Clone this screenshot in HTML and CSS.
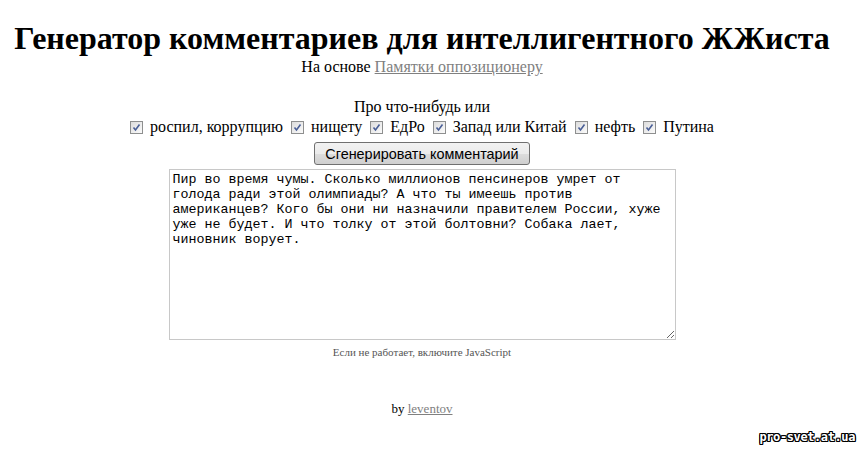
FILE: index.html
```html
<!DOCTYPE html>
<html lang="ru">
<head>
  <meta charset="UTF-8">
  <title>Генератор комментариев для интеллигентного ЖЖиста</title>
  <link rel="stylesheet" href="styles.css">
</head>
<body>
  <div class="page">
    <h1>Генератор комментариев для интеллигентного ЖЖиста</h1>
    <p class="subtitle">На основе <a href="#">Памятки оппозиционеру</a></p>

    <form class="generator">
      <div class="topics-title">Про что-нибудь или</div>
      <div class="topics">
        <label><input type="checkbox" checked> роспил, коррупцию</label>
        <label><input type="checkbox" checked> нищету</label>
        <label><input type="checkbox" checked> ЕдРо</label>
        <label><input type="checkbox" checked> Запад или Китай</label>
        <label><input type="checkbox" checked> нефть</label>
        <label><input type="checkbox" checked> Путина</label>
      </div>
      <button type="button" class="button">Сгенерировать комментарий</button>
      <textarea class="comment">Пир во время чумы. Сколько миллионов пенсинеров умрет от голода ради этой олимпиады? А что ты имеешь против американцев? Кого бы они ни назначили правителем России, хуже уже не будет. И что толку от этой болтовни? Собака лает, чиновник ворует.</textarea>
      <p class="note">Если не работает, включите JavaScript</p>
    </form>

    <p class="author">by <a href="#">leventov</a></p>
  </div>
  <div class="watermark">pro-svet.at.ua</div>
</body>
</html>
```

FILE: styles.css
```css
body {
  font-family: "Liberation Serif", "Times New Roman", serif;
  font-size: 16px;
  color: #000;
  background: #fff;
  margin: 0;
  padding-right: 17px;
}
a {
  color: #808080;
}
.page {
  text-align: center;
}
h1 {
  font-size: 32px;
  margin: 18px 0 0;
  line-height: 40px;
}
.subtitle {
  margin: 0;
  line-height: 18px;
}
.generator {
  margin-top: 21px;
  display: flex;
  flex-direction: column;
  align-items: center;
}
.topics-title {
  line-height: 20px;
}
.topics {
  display: flex;
  gap: 8px;
  line-height: 20px;
}
.topics label {
  display: flex;
  align-items: center;
  gap: 7px;
}
.topics input {
  appearance: none;
  -webkit-appearance: none;
  width: 13px;
  height: 13px;
  margin: 0;
  border: 1px solid #8e8f8f;
  background: url("data:image/svg+xml;utf8,<svg xmlns='http://www.w3.org/2000/svg' width='11' height='11'><path d='M2.5 5.5 L4.5 8 L8.5 2.5' fill='none' stroke='%234a5f97' stroke-width='1.6'/></svg>") center no-repeat, linear-gradient(135deg, #dcdcdc, #fbfbfb);
}
.button {
  margin-top: 5px;
  height: 23px;
  padding: 0 10px;
  font-family: "Liberation Sans", Tahoma, sans-serif;
  font-size: 14.4px;
  color: #000;
  border: 1px solid #707070;
  border-radius: 3px;
  background: linear-gradient(#f2f2f2 0%, #ebebeb 50%, #dddddd 51%, #cfcfcf 100%);
}
.comment {
  margin-top: 4px;
  width: 507px;
  height: 171px;
  box-sizing: border-box;
  padding: 2px 3px;
  border: 1px solid #c8c8c8;
  font-family: "Liberation Mono", "Courier New", monospace;
  font-size: 13.33px;
  line-height: 15px;
  color: #000;
  resize: both;
}
.note {
  margin: 6px 0 0;
  font-size: 11px;
  color: #555;
}
.author {
  margin: 43px 0 0;
  font-size: 13px;
}
.watermark {
  position: absolute;
  right: 6px;
  bottom: 5px;
  font-family: "DejaVu Sans Mono", monospace;
  font-weight: bold;
  font-size: 12px;
  letter-spacing: -0.4px;
  color: #fff;
  text-shadow: 1px 0 0 #000, -1px 0 0 #000, 0 1px 0 #000, 0 -1px 0 #000, 1px 1px 0 #000, -1px -1px 0 #000, 1px -1px 0 #000, -1px 1px 0 #000;
}
```
